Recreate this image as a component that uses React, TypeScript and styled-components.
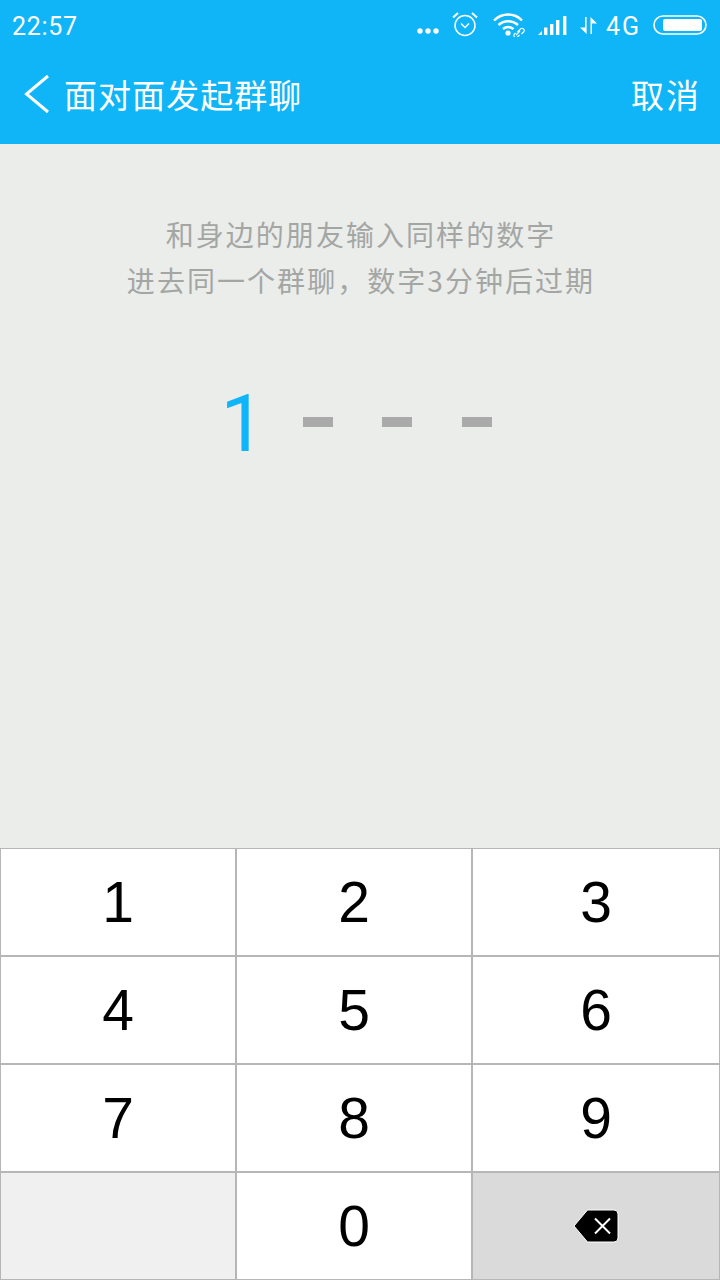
import React from "react";
import styled, { createGlobalStyle } from "styled-components";

const Global = createGlobalStyle`
  html, body { margin: 0; padding: 0; background: #ebedeb; }
  #root { width: 720px; height: 1280px; }
`;
const Page = styled.div`
  width: 720px; height: 1280px; display: flex; flex-direction: column;
  background: #ebedeb; overflow: hidden;
  font-family: "Noto Sans CJK SC", "Noto Sans", sans-serif;
`;
const Header = styled.header`
  height: 144px; background: #0fb5f6; color: #fff; display: flex; flex-direction: column;
  flex: none;
`;
const StatusBar = styled.div`
  height: 50px; display: flex; align-items: center; padding: 0 13px 0 12px;
`;
const Time = styled.span`
  font: 400 25px/44px Roboto, sans-serif; letter-spacing: 0.7px; margin-top: 3px;
`;
const StatusIcons = styled.div`
  margin-left: auto; display: flex; align-items: center;
`;
const Net = styled.span`
  font: 400 25px/44px Roboto, sans-serif; letter-spacing: 2px; margin: 3px 12px 0 9px;
`;
const NavBar = styled.div`
  height: 94px; display: flex; align-items: flex-start; padding: 0 19px 0 24px;
`;
const BackSlot = styled.div`
  height: 88px; display: flex; align-items: center;
`;
const Title = styled.span`
  font-size: 33px; line-height: 88px; margin-left: 14px; font-weight: 400; letter-spacing: 1.05px; flex: 1;
`;
const Cancel = styled.span`
  font-size: 33px; line-height: 88px; font-weight: 400; letter-spacing: 2px;
`;
const Body = styled.main`
  flex: 1; display: flex; flex-direction: column; align-items: center; padding-top: 67px;
`;
const Hint = styled.p`
  margin: 0 0 0 2px; color: #a4a6a4; font-size: 28px; line-height: 46px; text-align: center; font-weight: 400;
  letter-spacing: 2.05px;
`;
const Code = styled.div`
  display: flex; align-items: center; margin-top: 77px; height: 84px; padding-right: 8px;
`;
const Entered = styled.span`
  width: 82px; margin-top: 4px; color: #0fb5f8; font: 400 79px/84px Roboto, sans-serif; text-align: left;
`;
const Dash = styled.span`
  width: 30px; height: 10px; background: #aaaaaa; margin-right: 49.5px;
  &:last-child { margin-right: 0; }
`;
const Keypad = styled.div`
  flex: none; height: 432px; display: grid;
  grid-template-columns: 235px 236px 249px;
  grid-template-rows: 107px 108px 108px 109px;
  background: #fff;
`;
const Key = styled.div<{ $tone?: string }>`
  box-sizing: border-box; display: flex; align-items: center; justify-content: center;
  border-top: 2px solid #b6b6b6; border-left: 2px solid #b6b6b6;
  background: ${(p) => p.$tone || "#fff"};
  color: #000; font: 57px/1 "Liberation Sans", sans-serif;
  &:nth-child(-n + 3) { border-top-width: 1px; }
  &:nth-child(3n + 1) { border-left-width: 1px; }
  &:nth-child(3n) { border-right: 1px solid #b6b6b6; }
  &:nth-last-child(-n + 3) { border-bottom: 1px solid #b6b6b6; }
`;

const Dots = () => (
  <svg width="24" height="8" viewBox="0 0 24 8" style={{ marginTop: 11, marginRight: 12 }}>
    <circle cx="4" cy="4" r="2.7" fill="#fff" /><circle cx="12" cy="4" r="2.7" fill="#fff" /><circle cx="20" cy="4" r="2.7" fill="#fff" />
  </svg>
);
const Alarm = () => (
  <svg width="26" height="26" viewBox="0 0 26 26" fill="none" stroke="#fff" strokeWidth="1.5" style={{ marginRight: 15, marginTop: -2 }}>
    <circle cx="13" cy="14.5" r="10" />
    <path d="M9 12.5 13 16.5 17 12.5" />
    <path d="M1 6.5 6 2M25 6.5 20 2" strokeWidth="2" />
  </svg>
);
const Wifi = () => (
  <svg width="33" height="24" viewBox="0 0 33 24" fill="none" stroke="#fff" style={{ marginRight: 12 }}>
    <path d="M1 7.5C9 -0.5 21.5 -0.5 29 7.5" strokeWidth="2.4" />
    <path d="M5.5 12C11 7 19 7 25 12" strokeWidth="2.4" />
    <path d="M10 16C13 13.5 17 13.5 20.5 16" strokeWidth="2.4" />
    <circle cx="15" cy="20" r="2.6" fill="#fff" stroke="none" />
    <path d="M23 22 27 18M24.5 19l3-3a2 2 0 0 1 3 3l-2 2M26.5 22l-2 2a2 2 0 0 1-3-3l1-1" strokeWidth="1.1" />
  </svg>
);
const Signal = () => (
  <svg width="30" height="20" viewBox="0 0 30 20" fill="#fff" style={{ marginRight: 12 }}>
    <path d="M0 20 4 16V20Z" /><rect x="6" y="12.5" width="3.4" height="7.5" /><rect x="12" y="9" width="3.4" height="11" /><rect x="18" y="5" width="3.4" height="15" /><rect x="25" y="1" width="3.4" height="19" />
  </svg>
);
const Arrows = () => (
  <svg width="17" height="17" viewBox="0 0 17 17" fill="#fff" style={{ marginTop: 1 }}>
    <path d="M5 0h1.6v17L0 10.5h5Z" /><path d="M10.5 17V0L17 6.5H12V17Z" />
  </svg>
);
const Battery = () => (
  <svg width="54" height="20" viewBox="0 0 54 20" style={{ marginTop: -1 }}>
    <rect x="1" y="1" width="52" height="18" rx="9" fill="none" stroke="#fff" strokeWidth="1.6" />
    <rect x="10" y="4" width="39" height="12" rx="2" fill="#fff" />
  </svg>
);
const Back = () => (
  <svg width="26" height="40" viewBox="0 0 26 40" fill="none" stroke="#fff" strokeWidth="3">
    <path d="M24 2 2.5 20 24 38" />
  </svg>
);
const Backspace = () => (
  <svg width="46" height="34" viewBox="0 0 46 34">
    <path d="M14.5 1H41a4 4 0 0 1 4 4v24a4 4 0 0 1-4 4H14.5L1 17Z" fill="#000" stroke="#fff" strokeWidth="1" />
    <path d="M22 9.5 37 24.5M37 9.5 22 24.5" stroke="#fff" strokeWidth="2" />
  </svg>
);

export default function App() {
  const digits = ["1", "2", "3", "4", "5", "6", "7", "8", "9"];
  return (
    <Page>
      <Global />
      <Header>
        <StatusBar>
          <Time>22:57</Time>
          <StatusIcons>
            <Dots /><Alarm /><Wifi /><Signal /><Arrows /><Net>4G</Net><Battery />
          </StatusIcons>
        </StatusBar>
        <NavBar>
          <BackSlot><Back /></BackSlot>
          <Title>面对面发起群聊</Title>
          <Cancel>取消</Cancel>
        </NavBar>
      </Header>
      <Body>
        <Hint>和身边的朋友输入同样的数字<br />进去同一个群聊，数字3分钟后过期</Hint>
        <Code>
          <Entered>1</Entered>
          <Dash /><Dash /><Dash />
        </Code>
      </Body>
      <Keypad>
        {digits.map((d) => <Key key={d}>{d}</Key>)}
        <Key $tone="#f0f0f0" />
        <Key>0</Key>
        <Key $tone="#dadada"><Backspace /></Key>
      </Keypad>
    </Page>
  );
}
